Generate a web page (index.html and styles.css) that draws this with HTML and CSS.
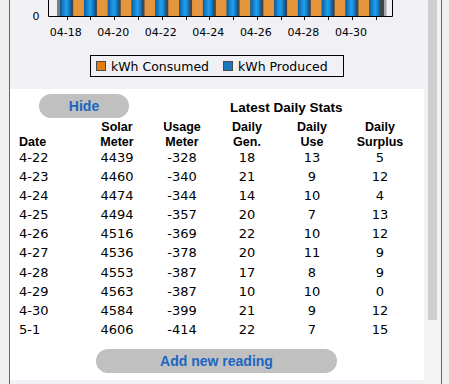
FILE: index.html
```html
<!DOCTYPE html>
<html lang="en">
<head>
  <meta charset="UTF-8">
  <title>Solar Stats</title>
  <link rel="stylesheet" href="styles.css">
</head>
<body>
  <div class="window">
    <div class="main">

      <div class="chart">
        <svg class="plot" width="414" height="42" viewBox="10 0 414 42">
          <defs>
            <linearGradient id="blue" x1="0" x2="1" y1="0" y2="0">
              <stop offset="0" stop-color="#0b5c9c"/>
              <stop offset="0.3" stop-color="#1684d2"/>
              <stop offset="0.55" stop-color="#1fa0ee"/>
              <stop offset="0.8" stop-color="#157ec9"/>
              <stop offset="1" stop-color="#0c5690"/>
            </linearGradient>
          </defs>
          <!-- bar backing -->
          <rect x="57" y="0" width="327" height="16" fill="#454545"/>
          <rect x="57" y="0" width="3" height="16" fill="#7d7d7d"/>
          <rect x="384" y="0" width="2.5" height="16" fill="#a5a5a5"/>
          <g id="bars"></g>
          <!-- axes -->
          <path d="M48.5 0 V16.5 H392.5 V0" fill="none" stroke="#000"/>
          <g id="ticks" stroke="#000"></g>
          <text x="39.5" y="20" class="axis-label" text-anchor="end">0</text>
          <g id="labels"></g>
        </svg>

        <div class="legend">
          <span class="swatch orange"></span><span class="legend-text">kWh Consumed</span>
          <span class="swatch blue"></span><span class="legend-text">kWh Produced</span>
        </div>
      </div>

      <div class="panel">
        <div class="top-row">
          <button class="btn hide">Hide</button>
          <div class="title">Latest Daily Stats</div>
        </div>

        <div class="stats">
          <div class="head left">Date</div>
          <div class="head">Solar<br>Meter</div>
          <div class="head">Usage<br>Meter</div>
          <div class="head">Daily<br>Gen.</div>
          <div class="head">Daily<br>Use</div>
          <div class="head">Daily<br>Surplus</div>
        </div>
        <div class="stats rows" id="rows"></div>

        <button class="btn add">Add new reading</button>
      </div>
      <div class="strip"></div>
    </div>

    <div class="scrollbar">
      <div class="thumb"></div>
    </div>
  </div>

  <script>
    // chart bars, one pair per day
    var svgNs = "http://www.w3.org/2000/svg";
    var bars = document.getElementById("bars");
    var ticks = document.getElementById("ticks");
    var labels = document.getElementById("labels");
    var days = ["04-18","04-19","04-20","04-21","04-22","04-23","04-24","04-25","04-26","04-27","04-28","04-29","04-30","05-01"];
    days.forEach(function (d, i) {
      var t = 66.7 + i * 23.77;
      var b = document.createElementNS(svgNs, "rect");
      b.setAttribute("x", t - 6.5); b.setAttribute("y", 0);
      b.setAttribute("width", 11); b.setAttribute("height", 16);
      b.setAttribute("fill", "url(#blue)");
      bars.appendChild(b);
      if (i < days.length - 1) {
        var o = document.createElementNS(svgNs, "rect");
        o.setAttribute("x", t + 6.5); o.setAttribute("y", 0);
        o.setAttribute("width", 11); o.setAttribute("height", 16);
        o.setAttribute("fill", "#e5953c");
        bars.appendChild(o);
      }
      var l = document.createElementNS(svgNs, "line");
      var x = Math.round(t) + 0.5;
      l.setAttribute("x1", x); l.setAttribute("x2", x);
      l.setAttribute("y1", 17); l.setAttribute("y2", 20);
      ticks.appendChild(l);
      if (i % 2 === 0 && i < 13) {
        var tx = document.createElementNS(svgNs, "text");
        tx.setAttribute("x", t - 1); tx.setAttribute("y", 35.5);
        tx.setAttribute("text-anchor", "middle");
        tx.setAttribute("class", "axis-label");
        tx.textContent = d;
        labels.appendChild(tx);
      }
    });

    // table rows
    var data = [
      ["4-22", 4439, -328, 18, 13, 5],
      ["4-23", 4460, -340, 21, 9, 12],
      ["4-24", 4474, -344, 14, 10, 4],
      ["4-25", 4494, -357, 20, 7, 13],
      ["4-26", 4516, -369, 22, 10, 12],
      ["4-27", 4536, -378, 20, 11, 9],
      ["4-28", 4553, -387, 17, 8, 9],
      ["4-29", 4563, -387, 10, 10, 0],
      ["4-30", 4584, -399, 21, 9, 12],
      ["5-1", 4606, -414, 22, 7, 15]
    ];
    var rows = document.getElementById("rows");
    data.forEach(function (r) {
      r.forEach(function (v, j) {
        var c = document.createElement("div");
        c.className = j === 0 ? "cell left" : "cell";
        c.textContent = v;
        rows.appendChild(c);
      });
    });
  </script>
</body>
</html>
```

FILE: styles.css
```css
* {
  box-sizing: border-box;
}

body {
  margin: 0;
  width: 449px;
  height: 384px;
  overflow: hidden;
  background-color: #f0f0f0;
  font-family: "DejaVu Sans", Verdana, sans-serif;
  color: #000;
}

.window {
  display: flex;
  height: 384px;
}

.main {
  margin-left: 9px;
  width: 415px;
  border-left: 1px solid #646464;
  display: flex;
  flex-direction: column;
}

/* chart */
.chart {
  height: 89px;
  background-color: #f0f0f5;
}

.plot {
  display: block;
}

.axis-label {
  font-family: "DejaVu Sans", sans-serif;
  font-size: 11px;
  fill: #000;
}

.legend {
  margin: 13px auto 0;
  width: 254px;
  height: 22px;
  border: 1px solid #000;
  display: flex;
  align-items: center;
  padding-left: 5px;
  font-size: 12.5px;
}

.swatch {
  width: 10px;
  height: 10px;
  border: 1px solid #4a4a4a;
  margin-right: 5px;
}
.swatch.orange { background-color: #e07f10; }
.swatch.blue {
  background-color: #1679bd;
  margin-left: 14px;
}

/* stats panel */
.panel {
  height: 291px;
  background-color: #fff;
  padding: 5px 0 0 9px;
}

.top-row {
  display: flex;
  align-items: center;
}

.btn {
  border: none;
  border-radius: 12px;
  height: 24px;
  background-color: #c0c0c0;
  color: #1a66c4;
  font-family: "Liberation Sans", Arial, sans-serif;
  font-weight: bold;
  font-size: 14px;
  padding: 0;
}

.hide {
  margin-left: 20px;
  width: 90px;
}

.title {
  margin-left: 101px;
  margin-top: 2px;
  font-family: "Liberation Sans", Arial, sans-serif;
  font-weight: bold;
  font-size: 13.5px;
}

.stats {
  display: grid;
  grid-template-columns: 66px 64px 66px 64px 66px 70px;
  text-align: center;
}

.head {
  margin-top: 2px;
  align-self: end;
  font-family: "Liberation Sans", Arial, sans-serif;
  font-weight: bold;
  font-size: 12.5px;
  line-height: 15px;
}

.rows {
  margin-top: -2px;
}

.cell {
  font-size: 13px;
  line-height: 19.1px;
}

.left {
  text-align: left;
}

.add {
  display: block;
  margin: 10px 0 0 77px;
  width: 241px;
}

.strip {
  height: 4px;
  background-color: #f0f0f5;
}

/* scrollbar */
.scrollbar {
  width: 18px;
  background-color: #f3f3f3;
  border-right: 1px solid #646464;
}

.thumb {
  margin-left: 4px;
  width: 9px;
  height: 320px;
  background-color: #cdcdd2;
}
```
